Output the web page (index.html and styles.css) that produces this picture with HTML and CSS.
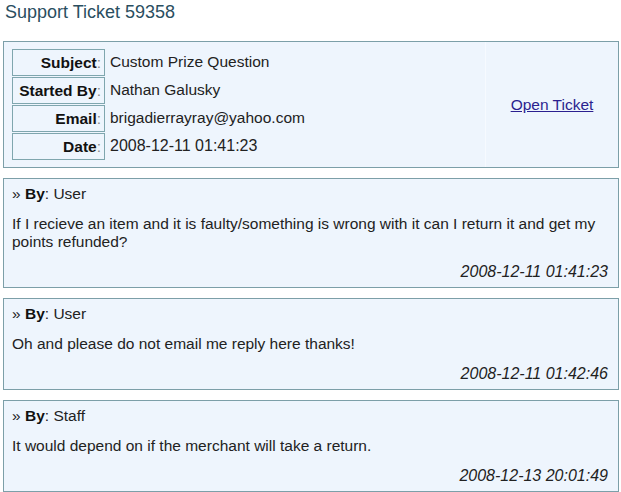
FILE: index.html
```html
<!DOCTYPE html>
<html>
<head>
<meta charset="utf-8">
<link rel="stylesheet" href="styles.css">
</head>
<body>
<h1 class="title">Support Ticket 59358</h1>
<div class="ticket">
  <div class="info">
    <div class="label"><b>Subject</b>:</div><div class="value">Custom Prize Question</div>
    <div class="label"><b>Started By</b>:</div><div class="value">Nathan Galusky</div>
    <div class="label"><b>Email</b>:</div><div class="value">brigadierrayray@yahoo.com</div>
    <div class="label"><b>Date</b>:</div><div class="value value-date">2008-12-11 01:41:23</div>
  </div>
  <div class="action"><a href="#" class="open-link">Open Ticket</a></div>
</div>
<div class="msg">
  <div class="by">» <b>By</b>: User</div>
  <div class="text">If I recieve an item and it is faulty/something is wrong with it can I return it and get my points refunded?</div>
  <div class="date">2008-12-11 01:41:23</div>
</div>
<div class="msg">
  <div class="by">» <b>By</b>: User</div>
  <div class="text">Oh and please do not email me reply here thanks!</div>
  <div class="date">2008-12-11 01:42:46</div>
</div>
<div class="msg">
  <div class="by">» <b>By</b>: Staff</div>
  <div class="text">It would depend on if the merchant will take a return.</div>
  <div class="date">2008-12-13 20:01:49</div>
</div>
</body>
</html>
```
FILE: styles.css
```css
html, body {
  margin: 0;
  background: #ffffff;
}
body {
  padding: 0 2px 0 3px;
  font-family: "Liberation Sans", Arial, sans-serif;
  font-size: 15.5px;
  line-height: 18px;
  color: #222222;
}
.title {
  margin: 0 0 17px 2px;
  font-size: 18px;
  line-height: 24px;
  font-weight: normal;
  color: #2a4e5f;
}
.ticket {
  display: flex;
  border: 1px solid #7c9fa8;
  background: #eef5fd;
}
.info {
  flex: 1;
  display: grid;
  grid-template-columns: 93px 1fr;
  row-gap: 1px;
  padding: 7px 0 7px 8px;
  border-right: 1px solid #f6faff;
}
.label {
  box-sizing: border-box;
  height: 27px;
  border: 1px solid #7fa6ae;
  text-align: right;
  padding: 0 3px 0 0;
  line-height: 25px;
  color: #888888;
}
.label b {
  color: #111111;
}
.value {
  height: 27px;
  line-height: 25px;
  padding-left: 5px;
}
.value-date {
  font-size: 16px;
}
.action {
  width: 132px;
  display: flex;
  align-items: center;
  justify-content: center;
}
.open-link {
  color: #2b1f8f;
}
.msg {
  margin-top: 10px;
  border: 1px solid #7c9fa8;
  background: #eef5fd;
  padding: 6px 10px 6px 8px;
}
.by b {
  color: #111111;
}
.text {
  margin-top: 12px;
}
.date {
  margin-top: 12px;
  text-align: right;
  font-style: italic;
  font-size: 16px;
}
```
